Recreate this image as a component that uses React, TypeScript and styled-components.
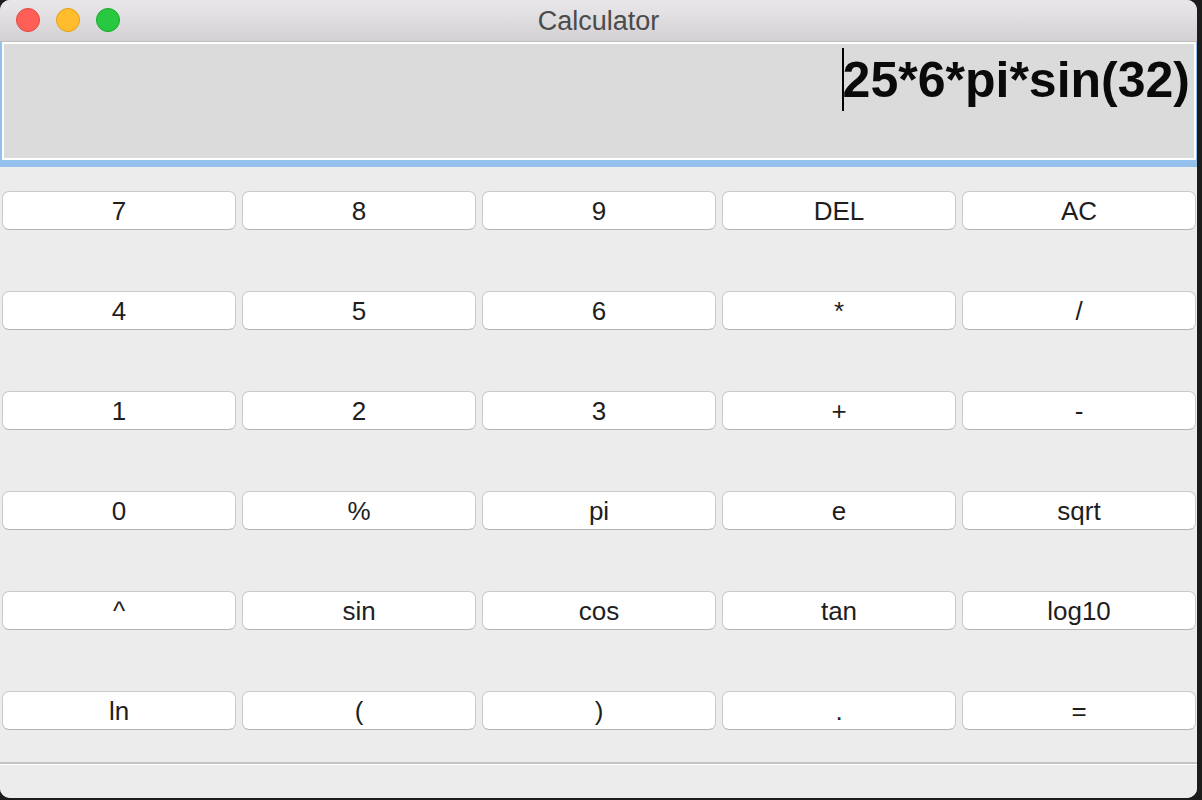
import React from "react";
import styled, { createGlobalStyle } from "styled-components";

const Global = createGlobalStyle`
  html, body { margin: 0; padding: 0; background: #1c1c1c; width: 1202px; height: 800px; overflow: hidden; }
  * { box-sizing: border-box; }
`;

const Window = styled.div`
  width: 1197px;
  height: 798px;
  background: #ececec;
  border-radius: 10px;
  overflow: hidden;
  display: flex;
  flex-direction: column;
  font-family: "Liberation Sans", Arial, sans-serif;
`;

const TitleBar = styled.div`
  height: 42px;
  flex: none;
  position: relative;
  display: flex;
  align-items: center;
  justify-content: center;
  background: linear-gradient(#e9e7e9, #d3d1d3);
  border-bottom: 1px solid #bdbbbd;
`;

const Lights = styled.div`
  position: absolute;
  left: 16px;
  top: 8px;
  display: flex;
  gap: 16px;
`;

const Light = styled.span<{ $fill: string; $edge: string }>`
  width: 24px;
  height: 24px;
  border-radius: 50%;
  background: ${(p) => p.$fill};
  border: 1px solid ${(p) => p.$edge};
`;

const Title = styled.div`
  font-size: 27px;
  color: #4b4b4b;
  margin-top: 1px;
`;

const Focus = styled.div`
  flex: none;
  background: #94c0ee;
  padding: 1px 1px 7px 2px;
  margin-top: -1px;
`;

const Field = styled.div`
  height: 118px;
  border: 2px solid #ffffff;
  background: #dbdbdb;
  display: flex;
  justify-content: flex-end;
  align-items: flex-start;
  padding: 7px 4px 0 0;
`;

const Expr = styled.div`
  position: relative;
  font-size: 50px;
  font-weight: 700;
  color: #0a0a0a;
  line-height: 58px;
  white-space: nowrap;
`;

const Caret = styled.span`
  position: absolute;
  left: -1px;
  top: -3px;
  width: 2px;
  height: 63px;
  background: #000;
`;

const Pad = styled.div`
  flex: 1;
  display: grid;
  grid-template-columns: repeat(5, 234px);
  grid-auto-rows: 39px;
  column-gap: 6px;
  row-gap: 61px;
  padding: 24px 0 0 2px;
`;

const Key = styled.button`
  height: 39px;
  background: #ffffff;
  border: 1px solid #cacaca;
  border-bottom-color: #b4b4b4;
  border-radius: 7px;
  font-family: "Liberation Sans", Arial, sans-serif;
  font-size: 26px;
  color: #1e1e1e;
  padding: 2px 0 0;
  display: flex;
  align-items: center;
  justify-content: center;
`;

const Footer = styled.div`
  flex: none;
  height: 36px;
  border-top: 2px solid #c4c4c4;
  box-shadow: inset 0 1px 0 #ffffff;
  background: #ececec;
`;

const keys = [
  "7", "8", "9", "DEL", "AC",
  "4", "5", "6", "*", "/",
  "1", "2", "3", "+", "-",
  "0", "%", "pi", "e", "sqrt",
  "^", "sin", "cos", "tan", "log10",
  "ln", "(", ")", ".", "=",
];

export default function App() {
  return (
    <>
      <Global />
      <Window>
        <TitleBar>
          <Lights>
            <Light $fill="#ff5f57" $edge="#e2463f" />
            <Light $fill="#ffbd2e" $edge="#e1a116" />
            <Light $fill="#28c940" $edge="#17a92a" />
          </Lights>
          <Title>Calculator</Title>
        </TitleBar>
        <Focus>
          <Field>
            <Expr>
              <Caret />
              25*6*pi*sin(32)
            </Expr>
          </Field>
        </Focus>
        <Pad>
          {keys.map((k) => (
            <Key key={k}>{k}</Key>
          ))}
        </Pad>
        <Footer />
      </Window>
    </>
  );
}
